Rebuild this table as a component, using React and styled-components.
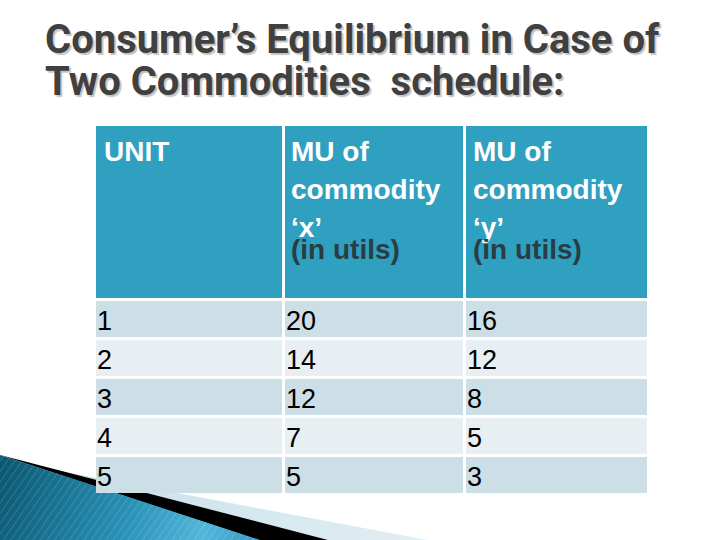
import styled, { createGlobalStyle } from 'styled-components'

const GlobalStyle = createGlobalStyle`
	html, body {
		margin: 0;
		padding: 0;
		background: #fff;
	}
`

const header = [
	{ lines: ['UNIT'], indent: 8 },
	{ lines: ['MU of', 'commodity', '‘x’'], indent: 6 },
	{ lines: ['MU of', 'commodity', '‘y’'], indent: 7 },
]

const rows = [
	['1', '20', '16'],
	['2', '14', '12'],
	['3', '12', '8'],
	['4', '7', '5'],
	['5', '5', '3'],
]

const Decoration = () => (
	<Corner viewBox='0 450 440 90' width='440' height='90'>
		<defs>
			<linearGradient id='wedge' x1='0' y1='470' x2='240' y2='540' gradientUnits='userSpaceOnUse'>
				<stop offset='0' stopColor='#0a5873' />
				<stop offset='0.55' stopColor='#2a92b8' />
				<stop offset='0.85' stopColor='#52b6da' />
				<stop offset='1' stopColor='#3ea4cb' />
			</linearGradient>
			<linearGradient id='pale' x1='80' y1='0' x2='430' y2='0' gradientUnits='userSpaceOnUse'>
				<stop offset='0' stopColor='#c9e0ea' />
				<stop offset='1' stopColor='#e2eff4' />
			</linearGradient>
			<pattern id='stripes' width='6' height='6' patternUnits='userSpaceOnUse' patternTransform='rotate(35)'>
				<rect width='1' height='6' fill='rgba(255,255,255,0.14)' />
			</pattern>
		</defs>
		<polygon points='0,460 428,540 0,540' fill='url(#pale)' />
		<polygon points='0,455 328,540 258,540' fill='#000' />
		<polygon points='0,455 260,540 0,540' fill='url(#wedge)' />
		<polygon points='0,455 260,540 0,540' fill='url(#stripes)' />
	</Corner>
)

const App = () => {
	return (
		<>
			<GlobalStyle />
			<Slide>
				<Decoration />
				<Content>
					<Title>
						Consumer’s Equilibrium in Case of
						<br />
						Two Commodities&nbsp; schedule:
					</Title>
					<Table>
						{header.map((cell, i) => (
							<HeadCell key={i} $indent={cell.indent}>
								{cell.lines.map((line) => (
									<HeadLine key={line}>{line}</HeadLine>
								))}
								{i > 0 && <Units>(in utils)</Units>}
							</HeadCell>
						))}
						{rows.map((row, r) =>
							row.map((value, c) => (
								<Cell key={`${r}-${c}`} $dark={r % 2 === 0}>
									{value}
								</Cell>
							))
						)}
					</Table>
				</Content>
			</Slide>
		</>
	)
}

const Slide = styled.div`
	position: relative;
	width: 720px;
	height: 540px;
	overflow: hidden;
	background: #fff;
`

const Corner = styled.svg`
	position: absolute;
	left: 0;
	bottom: 0;
	display: block;
`

const Content = styled.div`
	position: relative;
	display: flex;
	flex-direction: column;
	padding: 19px 0 0 45px;
`

const Title = styled.h1`
	margin: 0;
	font-family: Roboto, 'Open Sans', sans-serif;
	font-weight: 700;
	font-size: 40px;
	line-height: 42px;
	letter-spacing: 0;
	color: #404040;
	text-shadow: 2px 2px 1px #c4c4c4;
	white-space: nowrap;
`

const Table = styled.div`
	display: grid;
	grid-template-columns: 186px 178px 181px;
	grid-template-rows: 172px repeat(5, 36px);
	gap: 3px;
	margin: 23px 0 0 51px;
	font-family: 'Liberation Sans', Arial, sans-serif;
`

const HeadCell = styled.div`
	background: #2fa0c0;
	padding: 7px 0 0 ${(p) => p.$indent}px;
	display: flex;
	flex-direction: column;
`

const HeadLine = styled.span`
	font-size: 28px;
	line-height: 38px;
	font-weight: 700;
	color: #fff;
`

const Units = styled.span`
	font-size: 28px;
	line-height: 38px;
	font-weight: 700;
	color: #293d44;
	margin-top: -16px;
`

const Cell = styled.div`
	background: ${(p) => (p.$dark ? '#cddfe6' : '#e7eff2')};
	font-size: 27px;
	line-height: 36px;
	color: #000;
	padding: 2px 0 0 1px;
	box-sizing: border-box;
	overflow: hidden;
`

export default App
